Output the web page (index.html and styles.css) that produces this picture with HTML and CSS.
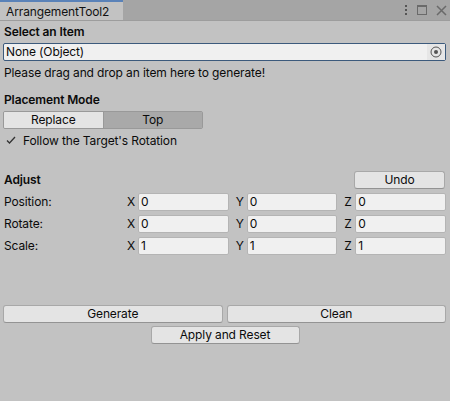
FILE: index.html
```html
<!DOCTYPE html>
<html>
<head>
<meta charset="utf-8">
<link rel="stylesheet" href="styles.css">
</head>
<body>
<div class="window">
  <div class="tabbar">
    <div class="tab">ArrangementTool2</div>
    <div class="winicons">
      <svg class="ico" width="4" height="14" viewBox="0 0 4 14"><rect x="1" y="2" width="2" height="2" fill="#555"/><rect x="1" y="6" width="2" height="2" fill="#555"/><rect x="1" y="10" width="2" height="2" fill="#555"/></svg>
      <svg class="ico" width="12" height="12" viewBox="0 0 12 12"><rect x="1.5" y="1.5" width="9" height="9" fill="none" stroke="#6a6a6a" stroke-width="1"/><rect x="1" y="1" width="10" height="2" fill="#6a6a6a"/></svg>
      <svg class="ico" width="11" height="11" viewBox="0 0 11 11"><path d="M1 1 L10 10 M10 1 L1 10" stroke="#6a6a6a" stroke-width="1.5"/></svg>
    </div>
  </div>
  <div class="content">
    <div class="heading">Select an Item</div>
    <div class="objfield">
      <span class="objtext">None (Object)</span>
      <span class="objpick"><svg width="12" height="12" viewBox="0 0 12 12"><circle cx="6" cy="6" r="5" fill="none" stroke="#555" stroke-width="1"/><circle cx="6" cy="6" r="2" fill="#555"/></svg></span>
    </div>
    <div class="line">Please drag and drop an item here to generate!</div>

    <div class="heading sec2">Placement Mode</div>
    <div class="toolbar">
      <div class="tbtn">Replace</div>
      <div class="tbtn on">Top</div>
    </div>
    <div class="check">
      <span class="box"><svg width="12" height="12" viewBox="0 0 12 12"><path d="M2 6.5 L4.5 9 L10 3" fill="none" stroke="#333" stroke-width="1.3"/></svg></span>
      <span>Follow the Target's Rotation</span>
    </div>

    <div class="adjusthead">
      <div class="heading">Adjust</div>
      <div class="btn undo">Undo</div>
    </div>
    <div class="vrow">
      <div class="vlabel">Position:</div>
      <div class="comp"><span class="cl">X</span><span class="field">0</span></div>
      <div class="comp"><span class="cl">Y</span><span class="field">0</span></div>
      <div class="comp"><span class="cl">Z</span><span class="field">0</span></div>
    </div>
    <div class="vrow">
      <div class="vlabel">Rotate:</div>
      <div class="comp"><span class="cl">X</span><span class="field">0</span></div>
      <div class="comp"><span class="cl">Y</span><span class="field">0</span></div>
      <div class="comp"><span class="cl">Z</span><span class="field">0</span></div>
    </div>
    <div class="vrow">
      <div class="vlabel">Scale:</div>
      <div class="comp"><span class="cl">X</span><span class="field">1</span></div>
      <div class="comp"><span class="cl">Y</span><span class="field">1</span></div>
      <div class="comp"><span class="cl">Z</span><span class="field">1</span></div>
    </div>

    <div class="actions">
      <div class="btn">Generate</div>
      <div class="btn">Clean</div>
    </div>
    <div class="center">
      <div class="btn apply">Apply and Reset</div>
    </div>
  </div>
</div>
</body>
</html>
```
FILE: styles.css
```css
* { box-sizing: border-box; }
html, body { margin: 0; padding: 0; }
body {
  width: 450px;
  height: 401px;
  background: #c2c2c2;
  font-family: Inter, "Noto Sans", sans-serif;
  font-size: 12px;
  letter-spacing: -0.12px;
  color: #0b0b0b;
  overflow: hidden;
}
.tabbar {
  height: 21px;
  background: #a5a5a5;
  display: flex;
  align-items: stretch;
  justify-content: space-between;
  border-bottom: 1px solid #9d9d9d;
}
.tab {
  width: 123px;
  background: #c2c2c2;
  border-top: 2px solid #5a82b8;
  padding: 1px 0 0 6px;
  font-size: 12px;
  line-height: 17px;
  color: #111;
}
.winicons {
  display: flex;
  align-items: center;
  gap: 8px;
  padding-right: 3px;
}
.content {
  padding: 3px 4px 0 3px;
}
.heading {
  font-weight: 600;
  line-height: 16px;
  padding-left: 1px;
  height: 17px;
}
.objfield {
  margin-top: 2px;
  height: 18px;
  display: flex;
  background: #f0f0f0;
  border: 1px solid #3c5a7c;
  border-radius: 2px;
}
.objtext {
  flex: 1;
  padding-left: 2px;
  line-height: 16px;
}
.objpick {
  width: 18px;
  background: #e6e6e6;
  display: flex;
  align-items: center;
  justify-content: center;
}
.line {
  margin-top: 4px;
  line-height: 16px;
  padding-left: 1px;
}
.sec2 { margin-top: 11px; }
.toolbar {
  margin-top: 2px;
  width: 200px;
  height: 18px;
  display: flex;
  border: 1px solid #999;
  border-radius: 2px;
  overflow: hidden;
}
.tbtn {
  flex: 1;
  text-align: center;
  line-height: 16px;
  background: #e4e4e4;
}
.tbtn.on {
  background: #a9a9a9;
  border-left: 1px solid #999;
}
.check {
  margin-top: 2px;
  height: 18px;
  display: flex;
  align-items: center;
  gap: 6px;
  padding-left: 1px;
}
.box {
  width: 13px;
  height: 13px;
  display: flex;
  align-items: center;
  justify-content: center;
}
.adjusthead {
  margin-top: 22px;
  height: 18px;
  display: flex;
  align-items: center;
  justify-content: space-between;
}
.btn {
  height: 18px;
  background: #e4e4e4;
  border: 1px solid #a8a8a8;
  border-bottom-color: #939393;
  border-radius: 3px;
  text-align: center;
  line-height: 16px;
}
.undo { width: 91px; margin-right: 1px; }
.vrow {
  margin-top: 4px;
  height: 18px;
  display: flex;
  gap: 5px;
}
.vlabel {
  width: 117px;
  padding-left: 1px;
  line-height: 18px;
}
.comp {
  flex: 1;
  display: flex;
}
.cl {
  width: 13px;
  line-height: 18px;
  padding-left: 2px;
}
.field {
  flex: 1;
  background: #f0f0f0;
  border: 1px solid #b4b4b4;
  border-radius: 2px;
  padding-left: 2px;
  line-height: 16px;
}
.actions {
  margin-top: 50px;
  display: flex;
  gap: 4px;
}
.actions .btn { flex: 1; }
.center {
  margin-top: 3px;
  display: flex;
  justify-content: center;
}
.apply { width: 149px; margin-left: 1px; }
```
